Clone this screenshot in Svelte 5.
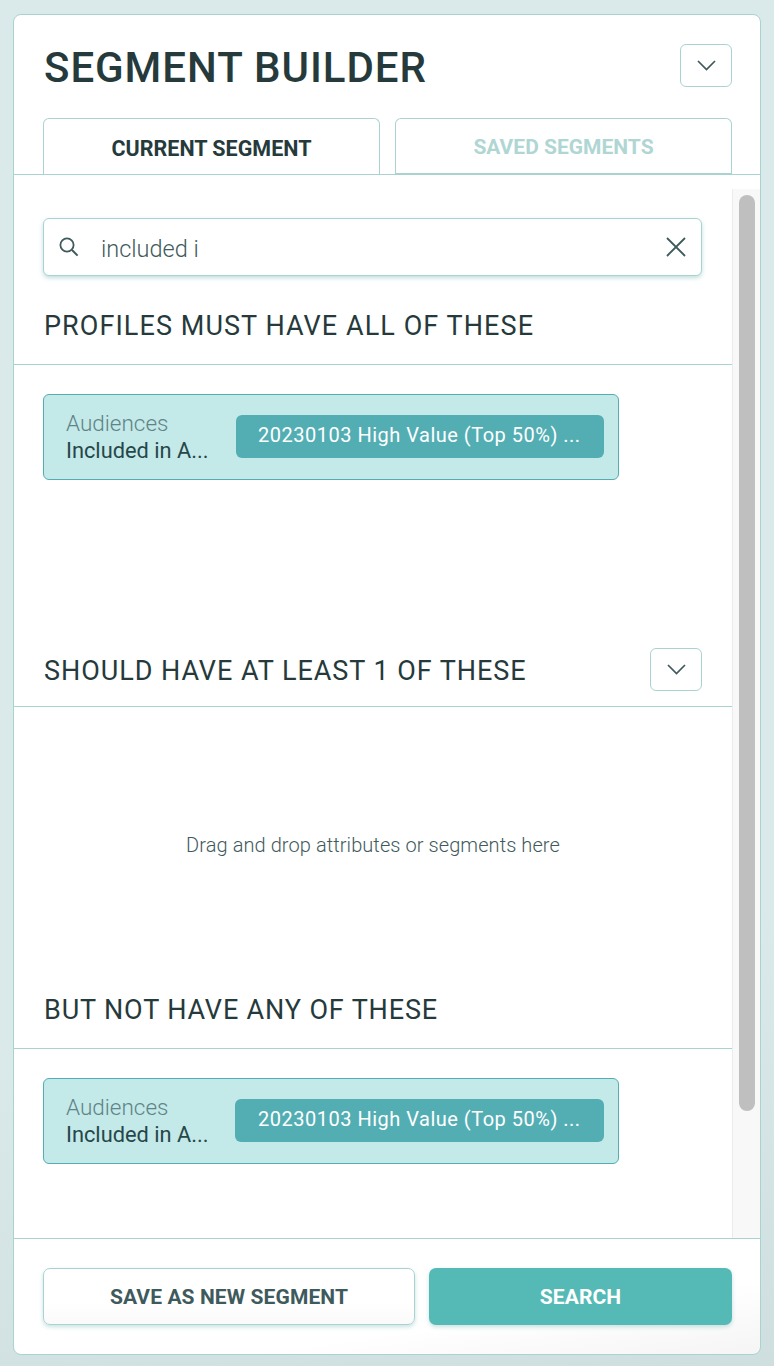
<script>
  const chipLabel = '20230103 High Value (Top 50%) ...';
</script>

{#snippet chevron()}
  <button class="toggle" aria-label="Collapse">
    <svg width="19" height="11" viewBox="0 0 19 11"><path d="M1 1l8.5 8.6L18 1" fill="none" stroke="#3f5a5c" stroke-width="1.7"/></svg>
  </button>
{/snippet}

{#snippet chip(wide)}
  <div class="chip">
    <div class="chip-text">
      <span class="cat">Audiences</span>
      <span class="attr">Included in A...</span>
    </div>
    <div class="value" class:wide>{chipLabel}</div>
  </div>
{/snippet}

<div class="page">
  <div class="card">
    <header>
      <div class="title-row">
        <h1>SEGMENT BUILDER</h1>
        {@render chevron()}
      </div>
      <div class="tabs">
        <div class="tab active">CURRENT SEGMENT</div>
        <div class="tab">SAVED SEGMENTS</div>
      </div>
    </header>

    <div class="middle">
      <div class="content">
        <div class="search">
          <svg width="20" height="20" viewBox="0 0 20 20"><circle cx="8" cy="8" r="6.6" fill="none" stroke="#3f5a5c" stroke-width="1.8"/><path d="m13 13 5.6 5.6" stroke="#3f5a5c" stroke-width="2"/></svg>
          <span class="query">included i</span>
          <svg class="clear" width="20" height="20" viewBox="0 0 20 20"><path d="M1 1l18 18M19 1 1 19" stroke="#3f5a5c" stroke-width="1.8"/></svg>
        </div>

        <div class="sec-head first"><h2>PROFILES MUST HAVE ALL OF THESE</h2></div>
        <div class="zone must">{@render chip(false)}</div>

        <div class="sec-head second">
          <h2>SHOULD HAVE AT LEAST 1 OF THESE</h2>
          {@render chevron()}
        </div>
        <div class="zone empty">Drag and drop attributes or segments here</div>

        <div class="sec-head third"><h2>BUT NOT HAVE ANY OF THESE</h2></div>
        <div class="zone not">{@render chip(true)}</div>
      </div>
      <div class="track"><div class="thumb"></div></div>
    </div>

    <footer>
      <button class="save">SAVE AS NEW SEGMENT</button>
      <button class="go">SEARCH</button>
    </footer>
  </div>
</div>

<style>
  :global(body) {
    margin: 0;
    background: #dae8e8;
  }

  .page {
    box-sizing: border-box;
    width: 774px;
    height: 1366px;
    padding: 14px 13px 11px 13px;
    background: linear-gradient(170deg, #dae9e9 70%, #cfdfdf 100%);
    font-family: Roboto, "Liberation Sans", sans-serif;
    color: #263a3c;
  }

  .card {
    box-sizing: border-box;
    height: 100%;
    display: flex;
    flex-direction: column;
    background: linear-gradient(172deg, #fff 95%, #f5f5f5 100%);
    border: 1px solid #a9d3d1;
    border-radius: 8px;
    overflow: hidden;
  }

  header {
    flex: none;
    height: 160px;
    box-sizing: border-box;
    padding: 29px 28px 0 29px;
    border-bottom: 1px solid #a9d3d1;
    display: flex;
    flex-direction: column;
  }

  .title-row {
    display: flex;
    justify-content: space-between;
    align-items: flex-start;
    height: 74px;
    flex: none;
  }

  h1 {
    margin: 0 0 0 1px;
    font-size: 42px;
    line-height: 48px;
    font-weight: 500;
    letter-spacing: 0.95px;
  }

  .toggle {
    box-sizing: border-box;
    width: 52px;
    height: 43px;
    padding: 0;
    display: flex;
    align-items: center;
    justify-content: center;
    background: #fff;
    border: 1px solid #a9d3d1;
    border-radius: 6px;
  }

  .tabs {
    display: flex;
    gap: 15px;
    flex: none;
  }

  .tab {
    box-sizing: border-box;
    flex: 1;
    height: 57px;
    display: flex;
    align-items: center;
    justify-content: center;
    padding-top: 2px;
    border: 1px solid #a9d3d1;
    border-bottom: none;
    border-radius: 6px 6px 0 0;
    font-size: 21.5px;
    font-weight: 700;
    color: #b0d6d4;
  }

  .tab:not(.active) {
    font-size: 21px;
    border-bottom: 2px solid #a9d3d1;
  }

  .tab.active {
    color: #263a3c;
  }

  .middle {
    flex: 1;
    min-height: 0;
    display: flex;
    border-bottom: 1px solid #a9d3d1;
  }

  .content {
    flex: 1;
    min-width: 0;
    padding-top: 43px;
  }

  .track {
    flex: none;
    width: 28px;
    margin-top: 14px;
    box-sizing: border-box;
    padding: 6px 5px 0 6px;
    background: #f8f8f8;
    border-left: 1px solid #ececec;
  }

  .thumb {
    height: 916px;
    border-radius: 8px;
    background: #bfbfbf;
  }

  .search {
    box-sizing: border-box;
    height: 58px;
    margin: 0 30px 0 29px;
    padding: 0 15px 0 15px;
    display: flex;
    align-items: center;
    background: #fff;
    border: 1px solid #a9d3d1;
    border-radius: 6px;
    box-shadow: 0 2px 4px rgba(120, 180, 178, 0.45);
  }

  .query {
    flex: 1;
    margin-left: 22px;
    padding-top: 3px;
    font-size: 23.5px;
    font-weight: 300;
    color: #3f5a5c;
  }

  .sec-head {
    box-sizing: border-box;
    display: flex;
    align-items: center;
    justify-content: space-between;
    padding: 0 30px 0 30px;
    border-bottom: 1px solid #a9d3d1;
  }

  .sec-head.first {
    height: 89px;
    padding-top: 11px;
  }

  .sec-head.second {
    height: 74px;
    padding-bottom: 1px;
  }

  .sec-head.second h2 {
    margin-top: 4px;
    letter-spacing: 0.95px;
  }

  .sec-head.third {
    height: 74px;
    padding-bottom: 4px;
  }

  .sec-head.third h2 {
    letter-spacing: 0.85px;
  }

  h2 {
    margin: 0;
    font-size: 27px;
    font-weight: 400;
    letter-spacing: 1.07px;
  }

  .zone {
    box-sizing: border-box;
    padding: 29px 0 0 29px;
  }

  .zone.must {
    height: 268px;
  }

  .zone.empty {
    height: 268px;
    padding: 126px 0 0 0;
    text-align: center;
    font-size: 20px;
    font-weight: 300;
    color: #3f5a5c;
    letter-spacing: 0.08px;
  }

  .chip {
    box-sizing: border-box;
    width: 576px;
    height: 86px;
    display: flex;
    align-items: center;
    padding: 0 14px 1px 22px;
    background: #c4e9e9;
    border: 1px solid #53aeb4;
    border-radius: 6px;
  }

  .chip-text {
    flex: 1;
    min-width: 0;
    display: flex;
    flex-direction: column;
    line-height: 27px;
  }

  .cat {
    font-size: 22.5px;
    font-weight: 300;
    color: #5e8486;
  }

  .attr {
    font-size: 21.8px;
    font-weight: 400;
    color: #264749;
  }

  .value {
    box-sizing: border-box;
    width: 368px;
    height: 43px;
    padding-left: 22px;
    line-height: 41px;
    font-size: 20px;
    letter-spacing: 0.5px;
    white-space: nowrap;
    color: #fff;
    background: #53aeb4;
    border-radius: 6px;
  }

  .value.wide {
    width: 369px;
    padding-left: 23px;
  }

  footer {
    flex: none;
    height: 115px;
    box-sizing: border-box;
    display: flex;
    justify-content: space-between;
    padding: 29px 28px 0 29px;
  }

  footer button {
    height: 57px;
    border-radius: 7px;
    font-family: inherit;
    font-size: 21px;
    font-weight: 700;
    letter-spacing: 0.1px;
  }

  .save {
    width: 372px;
    background: linear-gradient(180deg, #fff 60%, #fafafa 100%);
    border: 1px solid #a9d3d1;
    color: #3f5a5c;
    box-shadow: 0 2px 4px rgba(120, 180, 178, 0.4);
  }

  .go {
    width: 303px;
    background: #55bab5;
    border: none;
    color: #fff;
    box-shadow: 0 2px 4px rgba(120, 180, 178, 0.4);
  }
</style>
